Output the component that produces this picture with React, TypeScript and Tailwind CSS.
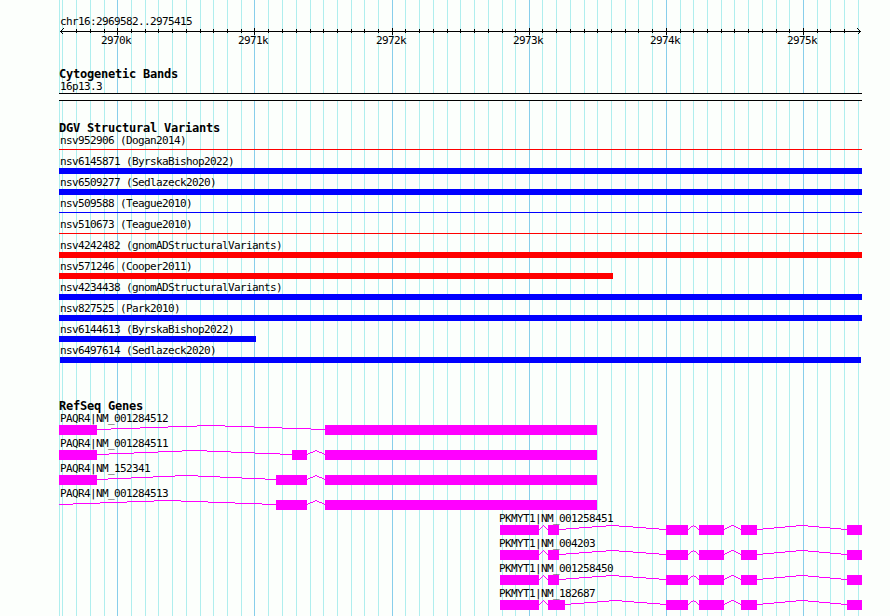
import React from 'react';

const LEFT = 59;
const WIDTH = 803;

const MAJOR_LINES = [117, 254, 392, 529, 666, 803];
const MINOR_LINES = [
    76, 90, 104, 131, 145, 158, 172, 186, 200, 213, 227, 241, 268, 282, 296, 310, 323, 337, 351, 364, 378,
    405, 419, 433, 447, 460, 474, 488, 502, 515, 542, 556, 570, 584, 597, 611, 625, 638, 652, 680, 693, 707,
    721, 734, 748, 762, 776, 789, 817, 830, 844,
];
const EDGE_LINES = [59, 62, 858];

interface Variant {
    name: string;
    bar: string;
}

const variants: Variant[] = [
    { name: 'nsv952906 (Dogan2014)', bar: 'mt-[2px] mb-[3px] h-px bg-[#ff0000]' },
    { name: 'nsv6145871 (ByrskaBishop2022)', bar: 'h-1.5 bg-[#0000ff]' },
    { name: 'nsv6509277 (Sedlazeck2020)', bar: 'h-1.5 bg-[#0000ff]' },
    { name: 'nsv509588 (Teague2010)', bar: 'mt-[2px] mb-[3px] h-px bg-[#0000ff]' },
    { name: 'nsv510673 (Teague2010)', bar: 'mt-[2px] mb-[3px] h-px bg-[#ff0000]' },
    { name: 'nsv4242482 (gnomADStructuralVariants)', bar: 'h-1.5 bg-[#ff0000]' },
    { name: 'nsv571246 (Cooper2011)', bar: 'h-1.5 w-[554px] bg-[#ff0000]' },
    { name: 'nsv4234438 (gnomADStructuralVariants)', bar: 'h-1.5 bg-[#0000ff]' },
    { name: 'nsv827525 (Park2010)', bar: 'h-1.5 bg-[#0000ff]' },
    { name: 'nsv6144613 (ByrskaBishop2022)', bar: 'h-1.5 w-[197px] bg-[#0000ff]' },
    { name: 'nsv6497614 (Sedlazeck2020)', bar: 'ml-px h-1.5 w-[801px] bg-[#0000ff]' },
];

interface Transcript {
    name: string;
    exons: [number, number][];
    // x where an intron enters from outside the window
    from?: number;
}

const paqr4: Transcript[] = [
    { name: 'PAQR4|NM_001284512', exons: [[59, 97], [325, 597]] },
    { name: 'PAQR4|NM_001284511', exons: [[59, 97], [292, 307], [325, 597]] },
    { name: 'PAQR4|NM_152341', exons: [[59, 97], [276, 307], [325, 597]] },
    { name: 'PAQR4|NM_001284513', exons: [[276, 307], [325, 597]], from: 59 },
];

const pkmyt1: Transcript[] = [
    { name: 'PKMYT1|NM_001258451', exons: [[500, 539], [548, 559], [666, 688], [699, 724], [741, 757], [847, 862]] },
    { name: 'PKMYT1|NM_004203', exons: [[500, 539], [548, 559], [666, 688], [699, 724], [741, 757], [847, 862]] },
    { name: 'PKMYT1|NM_001258450', exons: [[500, 539], [548, 559], [666, 688], [699, 724], [741, 757], [847, 862]] },
    { name: 'PKMYT1|NM_182687', exons: [[500, 539], [548, 565], [666, 688], [699, 724], [741, 757], [847, 862]] },
];

// stepped one-pixel hat line, four pixels high, between two exons
const STEP_STOPS = [0, 1 / 16, 3 / 16, 5 / 16, 7 / 16, 9 / 16, 11 / 16, 13 / 16, 15 / 16, 1];
const STEP_ROWS = [4, 3, 2, 1, 0, 1, 2, 3, 4];

const Intron: React.FC<{ start: number; end: number }> = ({ start, end }) => {
    const xs = STEP_STOPS.map((stop) => Math.round(start + (end - start) * stop));
    return (
        <g fill="#ff00ff">
            {STEP_ROWS.map((y, i) => (
                <rect key={i} x={xs[i]} y={y} width={xs[i + 1] - xs[i]} height="1" />
            ))}
        </g>
    );
};

const GridLines: React.FC = () => (
    <svg className="absolute inset-0" width="890" height="616" shapeRendering="crispEdges">
        {[...EDGE_LINES, ...MINOR_LINES].map((x) => (
            <rect key={x} x={x} y="0" width="1" height="616" fill="#afeeee" />
        ))}
        {MAJOR_LINES.map((x) => (
            <rect key={x} x={x} y="0" width="1" height="616" fill="#87ceeb" />
        ))}
    </svg>
);

const Ruler: React.FC = () => (
    <svg className="block shrink-0" width={WIDTH} height="67" viewBox={`${LEFT} 0 ${WIDTH} 67`}>
        <text x="60" y="25">chr16:2969582..2975415</text>
        <g shapeRendering="crispEdges">
            <rect x="60" y="31" width="801" height="1" />
            {MINOR_LINES.map((x) => (
                <rect key={x} x={x} y="29" width="1" height="4" />
            ))}
            {MAJOR_LINES.map((x) => (
                <rect key={x} x={x} y="28" width="1" height="7" />
            ))}
            <path d="M63.5 28.5L60.5 31.5L63.5 34.5M857.5 28.5L860.5 31.5L857.5 34.5" fill="none" stroke="#000" />
        </g>
        {MAJOR_LINES.map((x, i) => (
            <text key={x} x={x - 16} y="44">{`${2970 + i}k`}</text>
        ))}
    </svg>
);

const TrackTitle: React.FC<{ children: React.ReactNode }> = ({ children }) => (
    <h2 className="-mb-[3px] h-3.5 text-[12px] leading-[14px] font-bold tracking-[-0.224px]">{children}</h2>
);

const Label: React.FC<{ children: React.ReactNode; className?: string }> = ({ children, className = 'pl-px' }) => (
    <div className={`flex h-[15px] items-end leading-[13px] ${className}`}>{children}</div>
);

const Gene: React.FC<{ transcript: Transcript; labelClass?: string }> = ({ transcript, labelClass }) => {
    const { name, exons, from } = transcript;
    const introns = exons.slice(1).map((exon, i) => [exons[i][1], exon[0]]);
    if (from !== undefined) introns.unshift([from, exons[0][0]]);

    return (
        <div className="h-[25px]">
            <Label className={labelClass}>{name}</Label>
            <svg
                className="block"
                width={WIDTH}
                height="10"
                viewBox={`${LEFT} 0 ${WIDTH} 10`}
                shapeRendering="crispEdges"
            >
                {introns.map(([a, b]) => (
                    <Intron key={a} start={a} end={b} />
                ))}
                {exons.map(([a, b]) => (
                    <rect key={a} x={a} y="0" width={b - a} height="10" fill="#ff00ff" />
                ))}
            </svg>
        </div>
    );
};

export default function App() {
    return (
        <main className="relative h-[616px] w-[890px] overflow-hidden bg-[#fcfffc] font-['DejaVu_Sans_Mono',monospace] text-[11px] tracking-[-0.622px] whitespace-nowrap text-black">
            <GridLines />
            <div className="relative ml-[59px] flex w-[803px] flex-col">
                <Ruler />

                <section>
                    <TrackTitle>Cytogenetic Bands</TrackTitle>
                    <Label>16p13.3</Label>
                    <div className="h-2 border-y border-black bg-[#fcfffc]" />
                </section>

                <section className="mt-5">
                    <TrackTitle>DGV Structural Variants</TrackTitle>
                    {variants.map(({ name, bar }) => (
                        <div key={name} className="flex h-[21px] flex-col">
                            <Label>{name}</Label>
                            <div className={bar} />
                        </div>
                    ))}
                </section>

                <section className="mt-9">
                    <TrackTitle>RefSeq Genes</TrackTitle>
                    {paqr4.map((t) => (
                        <Gene key={t.name} transcript={t} />
                    ))}
                    {pkmyt1.map((t) => (
                        <Gene key={t.name} transcript={t} labelClass="pl-[440px]" />
                    ))}
                </section>
            </div>
        </main>
    );
}
